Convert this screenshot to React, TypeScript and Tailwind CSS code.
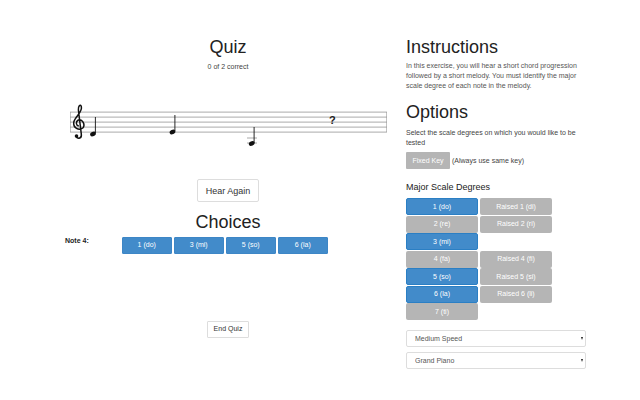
const choices = ['1 (do)', '3 (mi)', '5 (so)', '6 (la)'];

const degrees = [
  { label: '1 (do)', on: true, raised: 'Raised 1 (di)' },
  { label: '2 (re)', on: false, raised: 'Raised 2 (ri)' },
  { label: '3 (mi)', on: true, raised: '' },
  { label: '4 (fa)', on: false, raised: 'Raised 4 (fi)' },
  { label: '5 (so)', on: true, raised: 'Raised 5 (si)' },
  { label: '6 (la)', on: true, raised: 'Raised 6 (li)' },
  { label: '7 (ti)', on: false, raised: '' },
];

function Staff() {
  return (
    <svg width="336" height="50" viewBox="60 100 336 50" className="block">
      {/* Staff lines */}
      {[112, 117, 122, 127, 132].map((y) => (
        <line key={y} x1="70" x2="387" y1={y} y2={y} stroke="#bbb" strokeWidth="1.25" />
      ))}
      <line x1="70.5" x2="70.5" y1="112" y2="132" stroke="#999" strokeWidth="0.6" />
      <line x1="386.5" x2="386.5" y1="112" y2="132" stroke="#999" strokeWidth="0.6" />

      {/* Treble clef */}
      <path
        d="M76 136.5C78 139.5 82 138.5 81.3 134L78.4 110C78 106.5 80.3 103.5 81.3 106.5C83 112 75 116.5 73.8 122C72.8 128 79 131 82.8 128C85.8 124.5 82 118.5 78.3 120C75.3 121.8 76 125.5 78.8 126"
        fill="none"
        stroke="#111"
        strokeWidth="1.5"
      />
      <circle cx="76.5" cy="136" r="1.8" fill="#111" />

      {/* Notes */}
      <ellipse cx="93" cy="134" rx="3" ry="2.2" fill="#111" transform="rotate(-25 93 134)" />
      <line x1="95.4" x2="95.4" y1="117" y2="133" stroke="#111" strokeWidth="0.9" />
      <ellipse cx="172.5" cy="132" rx="3" ry="2.2" fill="#111" transform="rotate(-25 172.5 132)" />
      <line x1="174.9" x2="174.9" y1="115" y2="131" stroke="#111" strokeWidth="0.9" />
      <line x1="247" x2="257" y1="138" y2="138" stroke="#bbb" strokeWidth="1.25" />
      <line x1="247" x2="257" y1="143" y2="143" stroke="#bbb" strokeWidth="1.25" />
      <ellipse cx="251.7" cy="143.5" rx="3" ry="2.2" fill="#111" transform="rotate(-25 251.7 143.5)" />
      <line x1="254.1" x2="254.1" y1="127" y2="143" stroke="#111" strokeWidth="0.9" />
    </svg>
  );
}

function SelectBox({ label, className }: { label: string; className: string }) {
  return (
    <div className={`relative w-[180px] ${className}`}>
      <select className="appearance-none block w-full h-[17px] pl-[8px] bg-white border border-[#ddd] rounded-[2px] text-[7px] text-[#555]">
        <option>{label}</option>
      </select>
      <span className="absolute right-[3px] top-[7px] w-0 h-0 border-x-[1.5px] border-x-transparent border-t-[3px] border-t-[#222] pointer-events-none" />
    </div>
  );
}

export default function App() {
  return (
    <div className="relative flex w-[640px] h-[400px] overflow-hidden bg-white text-[7px] leading-[10px] text-[#333] font-['Liberation_Sans',Arial,sans-serif]">
      {/* Quiz column */}
      <div className="ml-[60px] w-[336px] flex flex-col items-center">
        <h1 className="mt-[37px] text-[18px] leading-[20px] text-[#222]">Quiz</h1>
        <p className="mt-[5px] text-[#444]">0 of 2 correct</p>
        <div className="relative mt-[28px]">
          <Staff />
          <span className="absolute left-[269px] top-[14px] text-[11px] leading-[12px] font-bold text-[#222]">?</span>
        </div>
        <button className="mt-[29px] w-[62px] h-[23px] bg-white border border-[#ddd] rounded-[2px] text-[9px] text-[#333]">
          Hear Again
        </button>
        <h2 className="mt-[10px] text-[18px] leading-[20px] text-[#222]">Choices</h2>
        <div className="self-start relative w-full mt-[5px] flex">
          <span className="absolute left-[5px] top-[-1px] font-bold text-[#222]">Note 4:</span>
          <div className="ml-[62px] flex gap-[2.5px]">
            {choices.map((c) => (
              <button
                key={c}
                className="w-[49.5px] h-[16.5px] bg-[#428bca] border border-[#3d86c6] rounded-[1px] text-white text-[7px]"
              >
                {c}
              </button>
            ))}
          </div>
        </div>
        <button className="mt-[67px] w-[42px] h-[17px] bg-white border border-[#ddd] rounded-[1px] text-[7px] text-[#333]">
          End Quiz
        </button>
      </div>

      {/* Instructions column */}
      <div className="ml-[10px] w-[180px]">
        <h1 className="mt-[37px] text-[18px] leading-[20px] text-[#222]">Instructions</h1>
        <p className="mt-[4px] w-[179px] text-[#555]">
          In this exercise, you will hear a short chord progression followed by a short melody. You must identify the
          major scale degree of each note in the melody.
        </p>
        <h2 className="mt-[11px] text-[18px] leading-[20px] text-[#222]">Options</h2>
        <p className="mt-[6px] text-[#444]">Select the scale degrees on which you would like to be tested</p>
        <div className="mt-[4px] flex items-center gap-[2px]">
          <button className="w-[44px] h-[17px] bg-[#b5b5b5] rounded-[1px] text-white text-[7px]">Fixed Key</button>
          <span className="text-[#444]">(Always use same key)</span>
        </div>
        <h3 className="mt-[13px] text-[9px] leading-[10px] text-[#222]">Major Scale Degrees</h3>
        <div className="mt-[6px] grid grid-cols-[72px_72px] gap-x-[2px] auto-rows-[17.5px]">
          {degrees.map((d) => [
            <button
              key={d.label}
              className={`h-[17px] rounded-[2px] text-white text-[7px] ${
                d.on ? 'bg-[#428bca] border border-[#2b7fc4]' : 'bg-[#b5b5b5]'
              }`}
            >
              {d.label}
            </button>,
            d.raised ? (
              <button key={d.raised} className="h-[17px] rounded-[2px] bg-[#b5b5b5] text-white text-[7px]">
                {d.raised}
              </button>
            ) : (
              <div key={d.label + '-empty'} />
            ),
          ])}
        </div>
        <SelectBox label="Medium Speed" className="mt-[9.5px]" />
        <SelectBox label="Grand Piano" className="mt-[5px]" />
      </div>
    </div>
  );
}
